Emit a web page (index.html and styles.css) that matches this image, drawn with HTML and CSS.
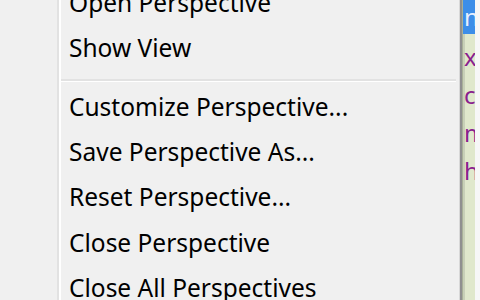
FILE: index.html
```html
<!DOCTYPE html>
<html>
<head>
<meta charset="utf-8">
<link rel="stylesheet" href="styles.css">
</head>
<body>
<div class="screen">
  <div class="menu">
    <div class="gutter"></div>
    <ul class="items">
      <li class="item sub">Open Perspective<span class="arrow"></span></li>
      <li class="item sub">Show View<span class="arrow"></span></li>
      <li class="sep"></li>
      <li class="item">Customize Perspective...</li>
      <li class="item">Save Perspective As...</li>
      <li class="item">Reset Perspective...</li>
      <li class="item">Close Perspective</li>
      <li class="item">Close All Perspectives</li>
    </ul>
  </div>
  <div class="shadow"></div>
  <div class="editor">
    <div class="code">
      <div class="line sel">n</div>
      <div class="line">x</div>
      <div class="line">c</div>
      <div class="line">m</div>
      <div class="line">h</div>
    </div>
  </div>
  <div class="rest"></div>
</div>
</body>
</html>
```

FILE: styles.css
```css
html, body {
  margin: 0;
  padding: 0;
  background: #f0f0f0;
  overflow: hidden;
}
.screen {
  display: flex;
  width: 480px;
  height: 300px;
  overflow: hidden;
}
.menu {
  position: relative;
  display: flex;
  width: 459px;
  background: #f0f0f0;
}
.gutter {
  width: 57px;
  flex: none;
  border-right: 2px solid #e2e2e2;
  box-shadow: 2px 0 0 #ffffff;
}
.items {
  list-style: none;
  margin: -20px 0 0 0;
  padding: 0;
  flex: 1;
}
.item {
  display: flex;
  align-items: center;
  height: 45.3px;
  padding-left: 10px;
  font-family: "Noto Sans", "Open Sans", sans-serif;
  font-size: 24.5px;
  color: #000;
  position: relative;
  white-space: nowrap;
}
.arrow {
  position: absolute;
  left: 430px;
  top: 16px;
  width: 0;
  height: 0;
  border-top: 6px solid transparent;
  border-bottom: 6px solid transparent;
  border-left: 7px solid #222;
}
.sep {
  height: 13px;
  box-sizing: border-box;
  padding-top: 8px;
  margin-left: 2px;
  margin-right: 3px;
}
.sep::before {
  content: "";
  display: block;
  height: 2px;
  background: #e2e2e2;
  border-bottom: 1px solid #ffffff;
}
.shadow {
  width: 4px;
  flex: none;
  background: linear-gradient(to right, #d8d8d8 0 1px, #909090 1px 3px, #a8b098 3px 4px);
}
.editor {
  width: 12px;
  flex: none;
  background: linear-gradient(to right, #c8d0b8 0 2px, #e0e8cc 2px);
  overflow: hidden;
}
.code {
  font-family: "Noto Sans", sans-serif;
  font-size: 24px;
  color: #8a1f8e;
  white-space: nowrap;
}
.line {
  height: 38px;
  line-height: 38px;
  padding-left: 1px;
}
.line.sel {
  height: 34px;
  line-height: 34px;
  margin-bottom: 4px;
  background: #3d8ee8;
  color: #e8f0ff;
}
.rest {
  flex: 1;
  background: #f7f7f7;
}
```
